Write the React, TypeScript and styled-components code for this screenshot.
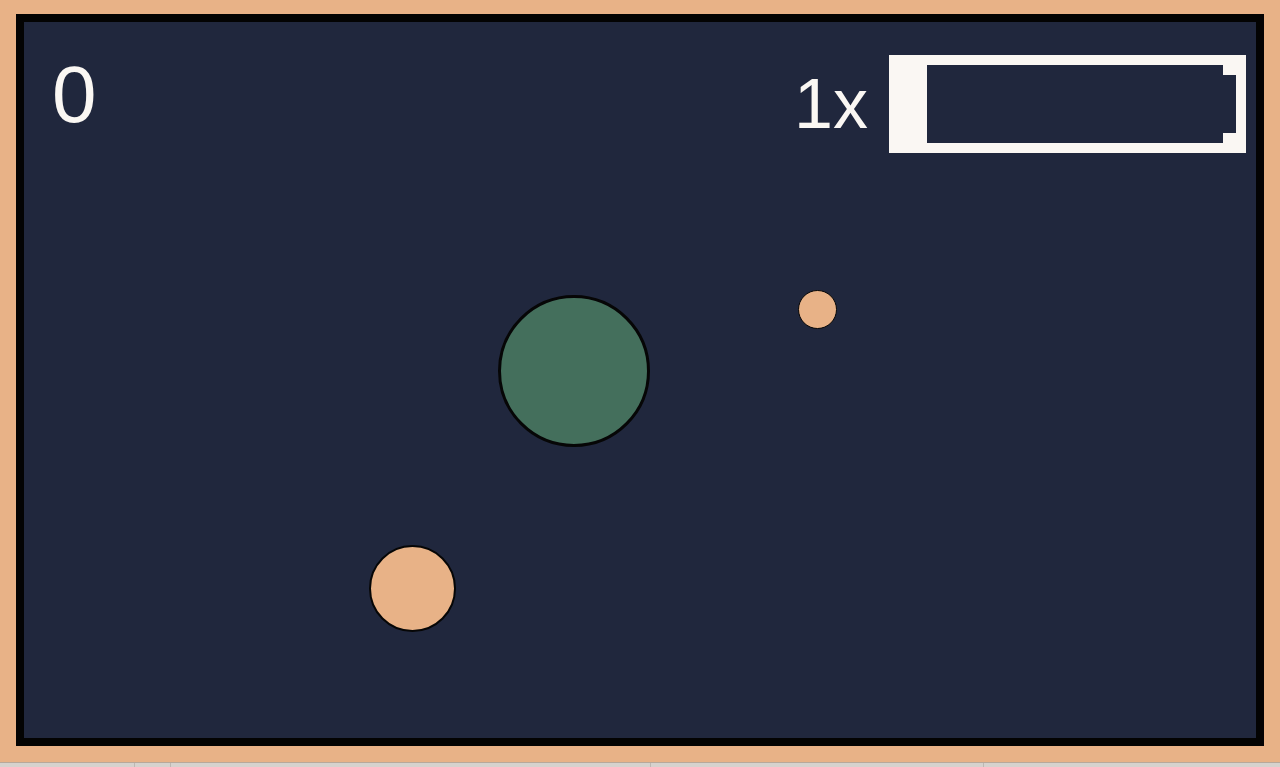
import React from "react";
import styled, { createGlobalStyle } from "styled-components";

const PEACH = "#e8b287";
const NAVY = "#20273d";
const CHALK = "#faf7f3";

const GlobalStyle = createGlobalStyle`
  html, body {
    margin: 0;
    padding: 0;
    background: ${PEACH};
    overflow: hidden;
  }
  * {
    box-sizing: border-box;
  }
`;

const Page = styled.div`
  width: 1280px;
  height: 767px;
  display: flex;
  flex-direction: column;
  background: ${PEACH};
`;

const Arena = styled.div`
  position: relative;
  width: 1248px;
  height: 732px;
  margin: 14px 16px 16px;
  border: 8px solid #030303;
  background: ${NAVY};
  font-family: "Liberation Sans", Arial, sans-serif;
  color: ${CHALK};
`;

const Hud = styled.div`
  display: flex;
  justify-content: space-between;
  align-items: flex-start;
  padding: 33px 10px 0 28px;
`;

const Score = styled.div`
  font-size: 80px;
  line-height: 1;
`;

const PowerGroup = styled.div`
  display: flex;
  align-items: center;
  gap: 21px;
`;

const Multiplier = styled.div`
  font-size: 70px;
  line-height: 1;
`;

const Battery = styled.div`
  width: 357px;
  height: 98px;
  padding: 10px 10px 10px 38px;
  background: ${CHALK};
  display: flex;
  align-items: center;
`;

const Cell = styled.div<{ $fill: number }>`
  flex: 1;
  height: 78px;
  background: linear-gradient(
    to right,
    ${PEACH} ${({ $fill }) => $fill * 100}%,
    ${NAVY} ${({ $fill }) => $fill * 100}%
  );
`;

const Nub = styled.div`
  width: 13px;
  height: 58px;
  background: ${NAVY};
`;

const Ball = styled.div<{ $size: number; $color: string; $edge: number }>`
  position: absolute;
  width: ${({ $size }) => $size}px;
  height: ${({ $size }) => $size}px;
  border-radius: 50%;
  background: ${({ $color }) => $color};
  border: ${({ $edge }) => $edge}px solid #060606;
`;

const Tray = styled.div`
  height: 5px;
  margin-top: auto;
  display: flex;
  background: #d6d2ce;
  border-top: 1px solid #b8a89a;
`;

const TraySlot = styled.div<{ $w: number }>`
  width: ${({ $w }) => $w}px;
  border-right: 1px solid #bdb8b3;
`;

type Body = { x: number; y: number; d: number; color: string; edge: number };

const bodies: Body[] = [
  { x: 573.5, y: 371, d: 152, color: "#446f5c", edge: 3 },
  { x: 412, y: 588.5, d: 87, color: PEACH, edge: 2 },
  { x: 817, y: 309, d: 39, color: PEACH, edge: 1 },
];

export default function App() {
  const score = 0;
  const multiplier = 1;
  const charge = 0;

  return (
    <>
      <GlobalStyle />
      <Page>
        <Arena>
          <Hud>
            <Score>{score}</Score>
            <PowerGroup>
              <Multiplier>{multiplier}x</Multiplier>
              <Battery>
                <Cell $fill={charge} />
                <Nub />
              </Battery>
            </PowerGroup>
          </Hud>
          {bodies.map((b, i) => (
            <Ball
              key={i}
              $size={b.d}
              $color={b.color}
              $edge={b.edge}
              // arena content starts at (24, 22) in page coords
              style={{ left: b.x - b.d / 2 - 24, top: b.y - b.d / 2 - 22 }}
            />
          ))}
        </Arena>
        <Tray>
          <TraySlot $w={135} />
          <TraySlot $w={36} />
          <TraySlot $w={480} />
          <TraySlot $w={333} />
        </Tray>
      </Page>
    </>
  );
}
